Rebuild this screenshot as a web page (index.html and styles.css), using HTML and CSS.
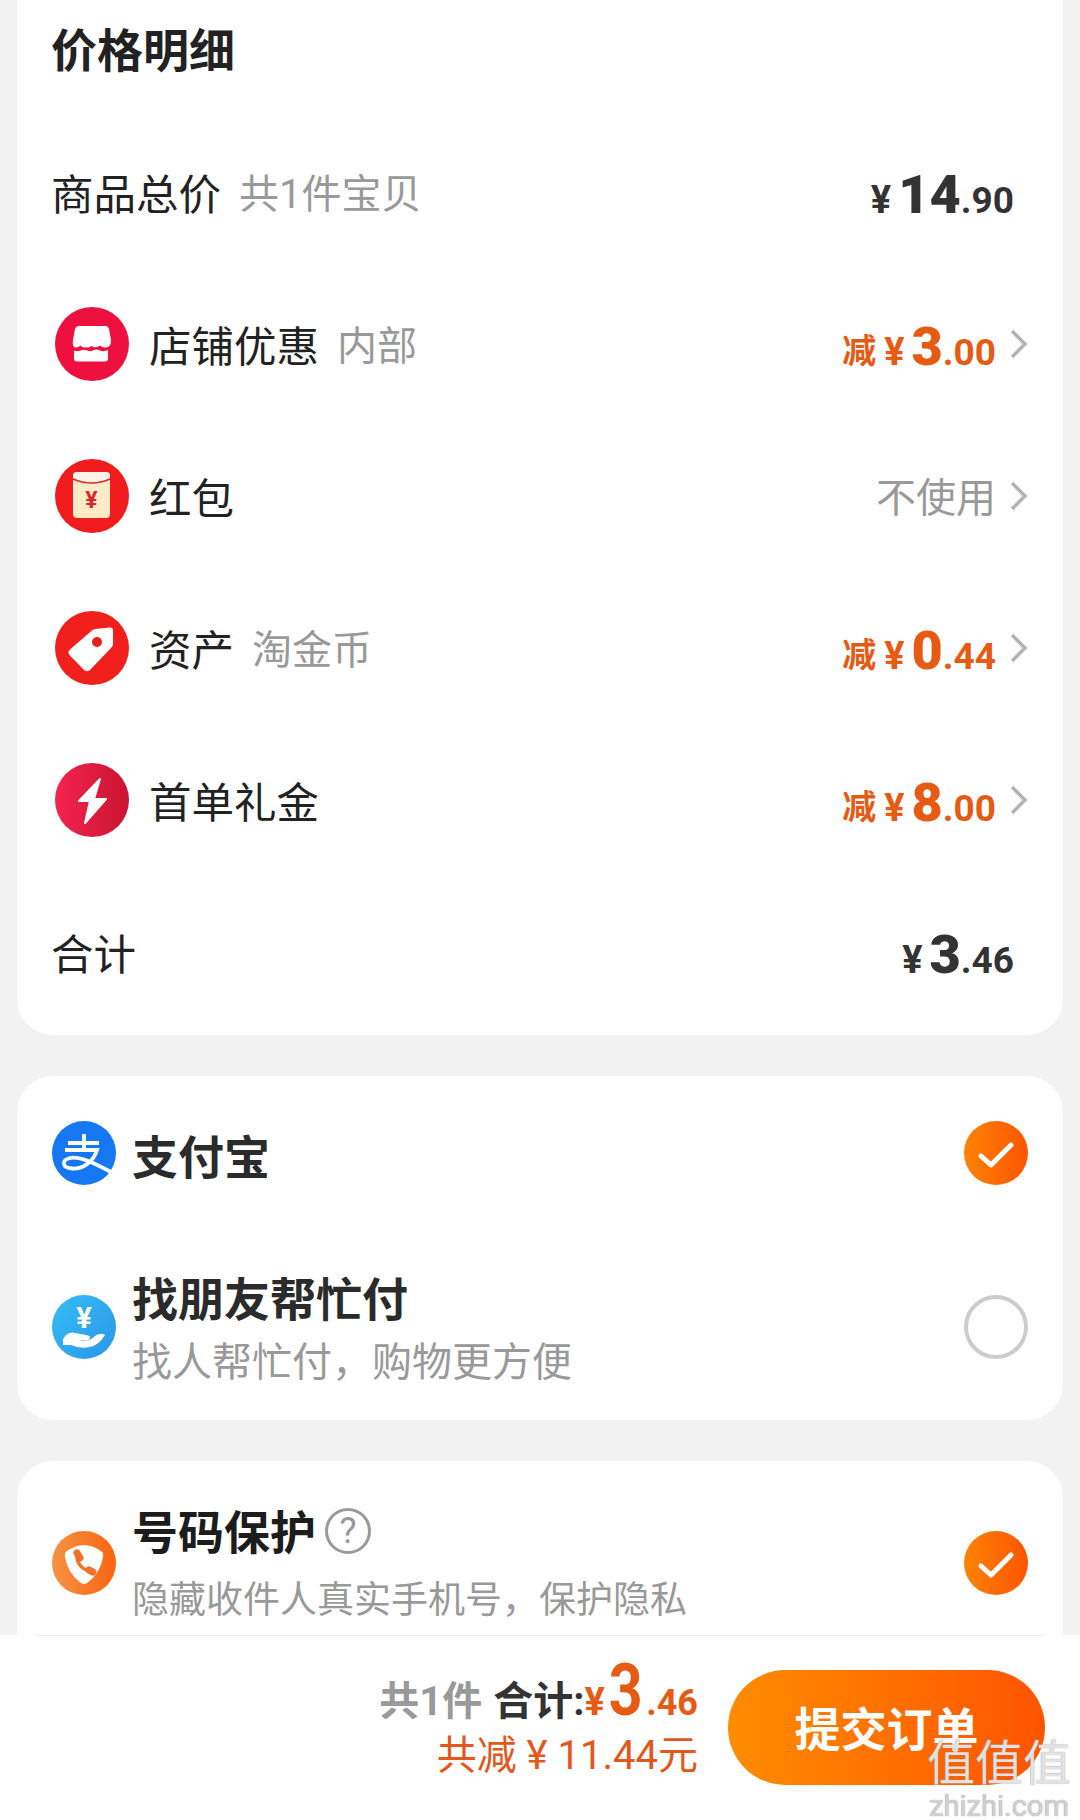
FILE: index.html
```html
<!DOCTYPE html>
<html lang="zh-CN">

<head>
    <meta charset="UTF-8">
    <meta name="viewport" content="width=device-width, initial-scale=1.0">
    <title>确认订单</title>
    <link rel="stylesheet" href="styles.css">
</head>

<body>
    <div class="page">
        <div class="content">
            <!-- 价格明细 -->
            <section class="card price-card">
                <h2 class="price-title">价格明细</h2>
                <div class="price-row">
                    <span class="label">商品总价</span>
                    <span class="note">共1件宝贝</span>
                    <span class="amount dark no-arrow"><i class="yen">¥</i><b class="big">14</b><i class="small">.90</i></span>
                </div>
                <div class="price-row">
                    <svg class="row-icon" viewBox="0 0 74 74">
                        <circle cx="37" cy="37" r="37" fill="#ee1140"/>
                        <path d="M24 19H50Q53 19 54 22L56 33Q56.500 40 51 40.500Q47 41 45 38.500Q42 41 39 40Q37 39.500 36.500 39Q34 41 31 40.500Q27 41 25.500 38.500Q23 41 20 40.500Q17 39 18 33L20 22Q21 19 24 19Z" fill="#fff"/>
                        <path d="M19 43.500Q22 45 25.500 43.500Q29 42 32 43.500Q36 45 39 43Q42 42 45 43.500Q49 45 53 43V51.500Q53 54.500 50 54.500H22Q19 54.500 19 51.500Z" fill="#fff"/>
                    </svg>
                    <span class="label">店铺优惠</span>
                    <span class="note">内部</span>
                    <span class="amount"><i class="cut">减</i><i class="yen">¥</i><b class="big">3</b><i class="small">.00</i></span>
                    <svg class="arrow" viewBox="0 0 18 30"><path d="M2 2L15 15L2 28"/></svg>
                </div>
                <div class="price-row">
                    <svg class="row-icon" viewBox="0 0 74 74">
                        <circle cx="37" cy="37" r="37" fill="#f01c1e"/>
                        <rect x="18" y="13" width="37" height="46" rx="4" fill="#fdebc8"/>
                        <path d="M18 20Q37 28 55 20V17Q55 13 51 13H22Q18 13 18 17Z" fill="#fdf3ea"/>
                        <path d="M18 20Q37 28 55 20" fill="none" stroke="#d8262a" stroke-width="1.500"/>
                        <text x="36.500" y="49" class="env-yen">¥</text>
                    </svg>
                    <span class="label">红包</span>
                    <span class="value">不使用</span>
                    <svg class="arrow" viewBox="0 0 18 30"><path d="M2 2L15 15L2 28"/></svg>
                </div>
                <div class="price-row">
                    <svg class="row-icon" viewBox="0 0 74 74">
                        <circle cx="37" cy="37" r="37" fill="#f2201c"/>
                        <path d="M40 18L55 16.500Q58 16.500 58 19.500L58 33Q58 35 56 37L35 59Q32 61.500 29 59L14.500 44Q12 41 15 38.500L37 19.500Q38.500 18.300 40 18Z" fill="#fff"/>
                        <circle cx="42" cy="31" r="5" fill="#e8201c"/>
                    </svg>
                    <span class="label">资产</span>
                    <span class="note">淘金币</span>
                    <span class="amount"><i class="cut">减</i><i class="yen">¥</i><b class="big">0</b><i class="small">.44</i></span>
                    <svg class="arrow" viewBox="0 0 18 30"><path d="M2 2L15 15L2 28"/></svg>
                </div>
                <div class="price-row">
                    <svg class="row-icon" viewBox="0 0 74 74">
                        <defs>
                            <linearGradient id="boltBg" x1="0" y1="0" x2="1" y2="0">
                                <stop offset="0" stop-color="#f4244f"/>
                                <stop offset="1" stop-color="#c81430"/>
                            </linearGradient>
                        </defs>
                        <circle cx="37" cy="37" r="37" fill="url(#boltBg)"/>
                        <path d="M45 16L24 38H35L30 60L51 36H39Z" fill="#fff" stroke="#fff" stroke-width="2" stroke-linejoin="round"/>
                    </svg>
                    <span class="label">首单礼金</span>
                    <span class="amount"><i class="cut">减</i><i class="yen">¥</i><b class="big">8</b><i class="small">.00</i></span>
                    <svg class="arrow" viewBox="0 0 18 30"><path d="M2 2L15 15L2 28"/></svg>
                </div>
                <div class="price-row">
                    <span class="label">合计</span>
                    <span class="amount dark no-arrow"><i class="yen">¥</i><b class="big">3</b><i class="small">.46</i></span>
                </div>
            </section>

            <!-- 支付方式 -->
            <section class="card pay-card">
                <div class="pay-row alipay">
                    <svg class="pay-icon" viewBox="0 0 64 64">
                        <circle cx="32" cy="32" r="32" fill="#1677f2"/>
                        <path d="M16 22H47M32 13V29M13 29H45C41 42 30 48 20 47.500C10 47 9 39 18 37C28 35 44 43 59 51" fill="none" stroke="#fff" stroke-width="3.800"/>
                    </svg>
                    <div class="pay-text">
                        <div class="pay-name">支付宝</div>
                    </div>
                    <svg class="check" viewBox="0 0 64 64">
                        <circle cx="32" cy="32" r="32" fill="url(#checkBg)"/>
                        <path d="M17 35L27 44L47 24" fill="none" stroke="#fff" stroke-width="5" stroke-linecap="round" stroke-linejoin="round"/>
                    </svg>
                </div>
                <div class="pay-row friend">
                    <svg class="pay-icon" viewBox="0 0 64 64">
                        <defs>
                            <linearGradient id="friendBg" x1="0" y1="0" x2="1" y2="1">
                                <stop offset="0" stop-color="#36bdf6"/>
                                <stop offset="1" stop-color="#2a96e8"/>
                            </linearGradient>
                        </defs>
                        <circle cx="32" cy="32" r="32" fill="url(#friendBg)"/>
                        <text x="32" y="33" class="hand-yen">¥</text>
                        <path d="M11 44Q16 36 23 38L34 40Q41 41 36 45H27Q37 47 43 41Q49 37 53 40Q47 50 38 52Q28 54 19 50L11 50Z" fill="#fff"/>
                    </svg>
                    <div class="pay-text">
                        <div class="pay-name">找朋友帮忙付</div>
                        <div class="pay-sub">找人帮忙付，购物更方便</div>
                    </div>
                    <span class="radio"></span>
                </div>
            </section>

            <!-- 号码保护 -->
            <section class="card protect-card">
                <div class="pay-row protect">
                    <svg class="pay-icon" viewBox="0 0 64 64">
                        <defs>
                            <linearGradient id="phoneBg" x1="0" y1="0" x2="1" y2="0">
                                <stop offset="0" stop-color="#f59345"/>
                                <stop offset="1" stop-color="#fb6410"/>
                            </linearGradient>
                            <linearGradient id="checkBg" x1="0" y1="0" x2="1" y2="0">
                                <stop offset="0" stop-color="#ff8306"/>
                                <stop offset="1" stop-color="#fd5500"/>
                            </linearGradient>
                        </defs>
                        <circle cx="32" cy="32" r="32" fill="url(#phoneBg)"/>
                        <path d="M15 20Q32 8 49 20Q52 22 51 26Q48 43 35 52Q32 54 29 52Q16 43 13 26Q12 22 15 20Z" fill="#fff"/>
                        <path d="M25 23C24 32 30 39 39 40" fill="none" stroke="#f0722a" stroke-width="3.500"/>
                        <path d="M25 22L28 27M37 39L41 41" fill="none" stroke="#f0722a" stroke-width="7" stroke-linecap="round"/>
                    </svg>
                    <div class="pay-text">
                        <div class="pay-name">号码保护<span class="help">?</span></div>
                        <div class="pay-sub">隐藏收件人真实手机号，保护隐私</div>
                    </div>
                    <svg class="check" viewBox="0 0 64 64">
                        <circle cx="32" cy="32" r="32" fill="url(#checkBg)"/>
                        <path d="M17 35L27 44L47 24" fill="none" stroke="#fff" stroke-width="5" stroke-linecap="round" stroke-linejoin="round"/>
                    </svg>
                </div>
            </section>
        </div>

        <footer class="bar">
            <div class="total">
                <div class="total-line">
                    <span class="count">共1件</span>
                    <span class="sum">合计:</span>
                    <span class="sum-yen">¥</span><span class="sum-big">3</span><span class="sum-small">.46</span>
                </div>
                <div class="saved">共减 ¥ 11.44元</div>
            </div>
            <button class="submit">提交订单</button>
            <div class="mark">
                <div class="mark-zh">值值值</div>
                <div class="mark-en">zhizhi.com</div>
            </div>
        </footer>
    </div>
</body>

</html>
```

FILE: styles.css
```css
* {
    margin: 0;
    padding: 0;
    box-sizing: border-box;
}
html, body {
    width: 100%;
    height: 100%;
    overflow: hidden;
}
body {
    background-color: #f2f2f2;
    color: #222;
    font-family: "Roboto", "Noto Sans CJK SC", sans-serif;
}
i {
    font-style: normal;
}
.page {
    height: 1820px;
    display: flex;
    flex-direction: column;
}
.content {
    flex: 1;
    overflow: hidden;
    padding: 0 17px;
    display: flex;
    flex-direction: column;
    gap: 41px;
}
.card {
    background-color: #fff;
    border-radius: 36px;
}

/* 价格明细 */
.price-card {
    border-radius: 0 0 36px 36px;
    padding: 0 35px 7px 34px;
    height: 1035px;
}
.price-title {
    height: 116px;
    padding-bottom: 22px;
    display: flex;
    align-items: center;
    font-size: 46px;
    font-weight: 700;
}
.price-row {
    height: 152px;
    display: flex;
    align-items: center;
}
.row-icon {
    width: 74px;
    height: 74px;
    margin: 0 20px 0 4px;
}
.label {
    font-size: 42.5px;
    color: #222;
    padding-bottom: 2px;
}
.note {
    margin-left: 18px;
    font-size: 40px;
    color: #999;
    padding-bottom: 2px;
}
.value {
    margin-left: auto;
    font-size: 40px;
    color: #999;
    padding-bottom: 2px;
}
.amount {
    margin-left: auto;
    padding-top: 4px;
    display: flex;
    align-items: baseline;
    color: #e65a14;
    font-weight: 700;
}
.amount.dark {
    color: #333;
}
.amount.no-arrow {
    margin-right: 14px;
}
.cut {
    font-size: 34px;
    margin-right: 8px;
    transform: translateY(-2px);
}
.yen {
    font-size: 38px;
    margin-right: 7px;
}
.big {
    font-size: 54px;
}
.small {
    font-size: 37px;
}
.arrow {
    width: 18px;
    height: 30px;
    margin-left: 14px;
}
.arrow path {
    fill: none;
    stroke: #b3b3b3;
    stroke-width: 3.5;
}
.env-yen {
    font-size: 23px;
    font-weight: 700;
    fill: #d8262a;
    text-anchor: middle;
}
.hand-yen {
    font-size: 29px;
    font-weight: 700;
    fill: #fff;
    text-anchor: middle;
}

/* 支付方式 */
.pay-card {
    height: 344px;
    flex-shrink: 0;
}
.pay-row {
    display: flex;
    align-items: center;
    padding: 0 35px;
}
.pay-row.alipay {
    height: 154px;
}
.pay-row.friend {
    height: 188px;
    padding-top: 6px;
}
.pay-icon {
    width: 64px;
    height: 64px;
    margin-right: 16px;
    flex-shrink: 0;
}
.pay-text {
    flex: 1;
    padding-top: 9px;
}
.pay-name {
    display: flex;
    align-items: center;
    font-size: 46px;
    line-height: 62px;
    font-weight: 700;
    color: #2b2b2b;
}
.pay-sub {
    font-size: 40px;
    line-height: 64px;
    color: #999;
}
.check {
    width: 64px;
    height: 64px;
    flex-shrink: 0;
}
.radio {
    width: 64px;
    height: 64px;
    border: 4px solid #ccc;
    border-radius: 50%;
    flex-shrink: 0;
}
.help {
    width: 46px;
    height: 46px;
    margin: -4px 0 0 9px;
    border: 3px solid #999;
    border-radius: 50%;
    display: flex;
    align-items: center;
    justify-content: center;
    font-size: 36px;
    font-weight: 400;
    color: #999;
}

/* 号码保护 */
.protect-card {
    flex: 1;
    border-radius: 36px 36px 0 0;
    padding-top: 30px;
}
.pay-row.protect {
    height: 144px;
}
.protect .pay-name {
    color: #1c1c1c;
}
.protect .pay-sub {
    font-size: 37px;
    margin-top: 5px;
}

/* 底部栏 */
.bar {
    position: relative;
    height: 185px;
    padding: 35px 35px 0 0;
    background-color: #fff;
    display: flex;
    justify-content: flex-end;
    align-items: flex-start;
    gap: 30px;
}
.bar::before {
    content: "";
    position: absolute;
    top: 0;
    left: 35px;
    right: 35px;
    border-top: 1px solid #eee;
}
.total {
    text-align: right;
    margin-top: -22px;
}
.total-line {
    display: flex;
    justify-content: flex-end;
    align-items: baseline;
    height: 82px;
    font-weight: 700;
}
.count {
    font-size: 40px;
    color: #999;
    margin-right: 11px;
}
.sum {
    font-size: 40px;
    color: #333;
}
.sum-yen,
.sum-big,
.sum-small {
    color: #e65a14;
}
.sum-yen {
    font-size: 38px;
    margin-right: 1px;
}
.sum-big {
    display: inline-block;
    margin: 0 0 0 -1px;
    font-size: 72px;
    transform: scaleX(0.82);
}
.sum-small {
    font-size: 36px;
}
.saved {
    font-size: 40px;
    line-height: 52px;
    color: #e2581c;
}
.submit {
    width: 317px;
    height: 115px;
    padding-bottom: 4px;
    border: none;
    border-radius: 58px;
    background: linear-gradient(90deg, #ff8c00, #ff5400);
    color: #fff;
    font-family: inherit;
    font-size: 46px;
    font-weight: 700;
}
.mark {
    position: absolute;
    right: 8px;
    bottom: 0;
    width: 146px;
    text-align: center;
    color: rgba(255, 255, 255, 0.78);
    text-shadow: 0 0 1px #777;
}
.mark-zh {
    font-size: 48px;
    line-height: 56px;
}
.mark-en {
    font-size: 29px;
    line-height: 28px;
    white-space: nowrap;
    color: rgba(215, 215, 215, 0.95);
}
```
